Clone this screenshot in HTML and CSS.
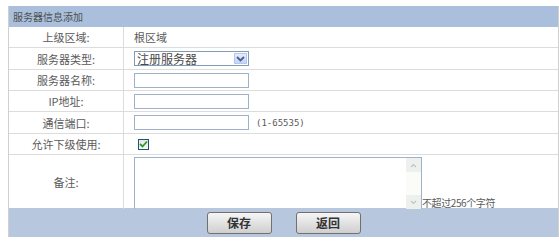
FILE: index.html
```html
<!DOCTYPE html>
<html lang="zh-CN">
<head>
<meta charset="utf-8">
<title>服务器信息添加</title>
<link rel="stylesheet" href="styles.css">
</head>
<body>
<div class="panel">
  <div class="head">服务器信息添加</div>
  <div class="row">
    <div class="label">上级区域:</div>
    <div class="value">根区域</div>
  </div>
  <div class="row row-t">
    <div class="label">服务器类型:</div>
    <div class="value">
      <div class="select">
        <span class="select-text">注册服务器</span>
        <span class="select-btn">
          <svg width="9" height="6" viewBox="0 0 9 6"><path d="M1 1 L4.5 4.5 L8 1" fill="none" stroke="#4d6185" stroke-width="1.8"/></svg>
        </span>
      </div>
    </div>
  </div>
  <div class="row">
    <div class="label">服务器名称:</div>
    <div class="value"><input class="text" type="text"></div>
  </div>
  <div class="row">
    <div class="label">IP地址:</div>
    <div class="value"><input class="text" type="text"></div>
  </div>
  <div class="row row-t">
    <div class="label">通信端口:</div>
    <div class="value"><input class="text" type="text"><span class="hint">(1-65535)</span></div>
  </div>
  <div class="row">
    <div class="label">允许下级使用:</div>
    <div class="value">
      <span class="check">
        <svg width="9" height="8" viewBox="0 0 9 8"><path d="M1 4 L3.5 6.5 L8 1.5" fill="none" stroke="#2a9a2a" stroke-width="1.8"/></svg>
      </span>
    </div>
  </div>
  <div class="row row-remark">
    <div class="label">备注:</div>
    <div class="value value-remark">
      <div class="textarea">
        <div class="scroll">
          <span class="sbtn"><svg width="7" height="5" viewBox="0 0 7 5"><path d="M1 4 L3.5 1.5 L6 4" fill="none" stroke="#b8c4d4" stroke-width="1.2"/></svg></span>
          <span class="sbtn"><svg width="7" height="5" viewBox="0 0 7 5"><path d="M1 1 L3.5 3.5 L6 1" fill="none" stroke="#b8c4d4" stroke-width="1.2"/></svg></span>
        </div>
      </div>
      <span class="limit">不超过256个字符</span>
    </div>
  </div>
  <div class="bar">
    <button class="btn" type="button">保存</button>
    <button class="btn" type="button">返回</button>
  </div>
</div>
</body>
</html>
```
FILE: styles.css
```css
html, body {
  margin: 0;
  padding: 0;
  background: #ffffff;
}
body {
  padding: 6px 0 0 8px;
  font-family: "Noto Sans CJK SC", "DejaVu Sans", sans-serif;
  font-size: 11px;
  color: #5a5a5a;
}
.panel {
  width: 549px;
  border-left: 1px solid #d0d0d0;
  border-right: 1px solid #d0d0d0;
}
.head {
  height: 21px;
  line-height: 21px;
  background: #a9bfdc;
  padding-left: 4px;
  color: #4f4f4f;
  font-size: 10px;
}
.row {
  display: grid;
  grid-template-columns: 115px 1fr;
  height: 20px;
  border-bottom: 1px solid #dcdcdc;
}
.row-t {
  height: 21px;
}
.row-remark {
  height: 53px;
  border-bottom: none;
}
.label {
  border-right: 1px solid #dcdcdc;
  display: flex;
  align-items: center;
  justify-content: center;
}
.value {
  display: flex;
  align-items: center;
  padding-left: 10px;
}
.value-remark {
  align-items: flex-end;
  padding-top: 2px;
  padding-bottom: 0;
}
.select {
  width: 113px;
  height: 13px;
  border: 1px solid #7f9db9;
  display: flex;
  align-items: center;
  justify-content: space-between;
  background: #fff;
}
.select-text {
  padding-left: 2px;
  font-size: 12px;
  color: #4a4a4a;
  line-height: 13px;
}
.select-btn {
  width: 13px;
  height: 11px;
  margin-right: 1px;
  background: linear-gradient(#e6eefc, #c1d3fb);
  border: 1px solid #b4c8f0;
  box-sizing: border-box;
  display: flex;
  align-items: center;
  justify-content: center;
}
.text {
  width: 115px;
  height: 15px;
  border: 1px solid #9fb2c9;
  box-sizing: border-box;
  margin: 0;
  padding: 0;
  outline: none;
}
.hint {
  margin-left: 7px;
  font-family: "DejaVu Sans Mono", monospace;
  font-size: 9px;
  color: #5a5a5a;
}
.check {
  margin-left: 4px;
  width: 11px;
  height: 11px;
  border: 1px solid #1c5180;
  box-sizing: border-box;
  background: linear-gradient(#e8e8e0, #f8f8f4);
  display: flex;
  align-items: center;
  justify-content: center;
}
.textarea {
  width: 288px;
  height: 52px;
  border: 1px solid #9fb2c9;
  border-bottom: none;
  box-sizing: border-box;
  display: flex;
  justify-content: flex-end;
}
.scroll {
  width: 15px;
  display: flex;
  flex-direction: column;
  justify-content: space-between;
  background: #fbfbf8;
}
.sbtn {
  height: 14px;
  background: #eef0ee;
  display: flex;
  align-items: center;
  justify-content: center;
}
.limit {
  font-size: 10px;
  letter-spacing: -0.4px;
  color: #5a5a5a;
  line-height: 13px;
}
.bar {
  height: 29px;
  background: #b7c7dd;
  display: flex;
  align-items: center;
  justify-content: center;
  gap: 24px;
}
.btn {
  width: 65px;
  height: 22px;
  margin: 0;
  padding: 0;
  border: 1px solid #707070;
  border-radius: 3px;
  background: linear-gradient(#f6f6f6, #dedede 60%, #cfcfcf);
  font-family: "Noto Sans CJK SC", sans-serif;
  font-size: 12px;
  font-weight: bold;
  color: #333;
}
```
